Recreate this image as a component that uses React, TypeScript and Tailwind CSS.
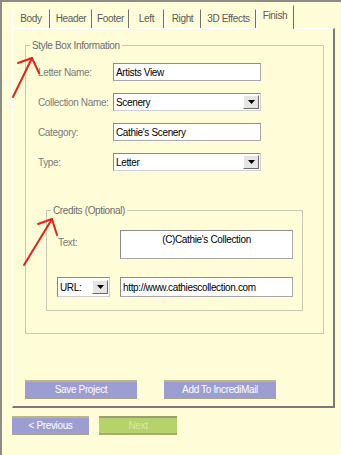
import React from "react";

const tabs = [
  { label: "Body", w: "w-[38px]" },
  { label: "Header", w: "w-[42px]" },
  { label: "Footer", w: "w-[37px]" },
  { label: "Left", w: "w-[35px]" },
  { label: "Right", w: "w-[37px]" },
  { label: "3D Effects", w: "w-[55px]" },
];

function Tab({ label, w }: { label: string; w: string }) {
  return (
    <div
      className={`${w} h-[19px] flex justify-center pt-[3px] border-t border-l border-white border-r border-r-[#6f6f6f] text-[#5a5a5a]`}
    >
      {label}
    </div>
  );
}

function TextBox({ value, className = "" }: { value: string; className?: string }) {
  return (
    <div
      className={`bg-white border border-[#a8a8a8] border-t-[#8c8c8c] border-l-[#8c8c8c] flex items-center pl-[2px] text-black ${className}`}
    >
      {value}
    </div>
  );
}

function Select({ value, className = "" }: { value: string; className?: string }) {
  return (
    <div
      className={`bg-white border border-[#8a8a8a] border-b-[#cfcfcf] border-r-[#cfcfcf] flex items-center pl-[2px] pr-[1px] text-black ${className}`}
    >
      <span className="flex-1">{value}</span>
      <div className="w-[16px] h-[14px] bg-[#e6e5e2] border border-white border-r-[#6a6a6a] border-b-[#6a6a6a] flex items-center justify-center">
        <svg width="7" height="4" viewBox="0 0 7 4">
          <path d="M0 0h7L3.5 4z" fill="#000" />
        </svg>
      </div>
    </div>
  );
}

function Btn({ label, className, green }: { label: string; className: string; green?: boolean }) {
  return (
    <div
      className={`${className} flex items-center justify-center border-t-2 border-b-2 ${
        green
          ? "bg-[#b6d36b] border-t-[#9c9c6c] border-b-[#a8a878] text-[#d7e8a2]"
          : "bg-[#9c9ed2] border-t-[#b9b38e] border-b-[#aaa684] text-white"
      }`}
    >
      {label}
    </div>
  );
}

export default function App() {
  return (
    <div className="relative w-[341px] h-[455px] overflow-hidden bg-[#fffcd8] border-t-2 border-l-2 border-[#8d8c84] font-['Liberation_Sans',Arial,sans-serif] text-[10px] leading-[11px] tracking-[-0.35px]">
      {/* Tab strip */}
      <div className="flex items-end h-[26px] pl-[10px]">
        {tabs.map((t) => (
          <Tab key={t.label} label={t.label} w={t.w} />
        ))}
        <div className="relative z-10 w-[38px] h-[24px] -mb-px bg-[#fffcd8] flex justify-center pt-[4px] border-t border-l border-white border-r border-r-[#6f6f6f] text-[#5a5a5a]">
          Finish
        </div>
      </div>

      {/* Tab panel */}
      <div className="ml-[10px] w-[323px] h-[380px] border-t border-l border-white border-r-2 border-b-2 border-r-[#7a7a7a] border-b-[#7a7a7a] pl-[12px] flex flex-col">
        <fieldset className="mt-[11px] w-[299px] border border-[#cac8b2] pb-[22px]">
          <legend className="ml-[4px] px-[2px] text-[#6c6c6c]">Style Box Information</legend>
          <div className="mt-[12px] pl-[12px] flex flex-col gap-[12px] text-[#7b7b7b]">
            <div className="flex items-center h-[18px]">
              <span className="w-[75px]">Letter Name:</span>
              <TextBox value="Artists View" className="w-[148px] h-[18px]" />
            </div>
            <div className="flex items-center h-[18px]">
              <span className="w-[75px]">Collection Name:</span>
              <Select value="Scenery" className="w-[148px] h-[18px]" />
            </div>
            <div className="flex items-center h-[18px]">
              <span className="w-[75px]">Category:</span>
              <TextBox value="Cathie's Scenery" className="w-[148px] h-[18px]" />
            </div>
            <div className="flex items-center h-[18px]">
              <span className="w-[75px]">Type:</span>
              <Select value="Letter" className="w-[148px] h-[18px]" />
            </div>
          </div>

          <fieldset className="mt-[34px] ml-[20px] w-[257px] border border-[#cac8b2] pb-[13px]">
            <legend className="ml-[4px] px-[2px] text-[#6c6c6c]">Credits (Optional)</legend>
            <div className="mt-[14px] pl-[10px] flex items-start">
              <span className="w-[63px] pl-[1px] pt-[7px] text-[#7b7b7b]">Text:</span>
              <div className="w-[173px] h-[29px] bg-white border border-[#a8a8a8] border-t-[#8c8c8c] border-l-[#8c8c8c] text-center pt-[3px] text-black">
                (C)Cathie's Collection
              </div>
            </div>
            <div className="mt-[18px] pl-[10px] flex items-center gap-[10px]">
              <Select value="URL:" className="w-[53px] h-[20px]" />
              <TextBox value="http://www.cathiescollection.com" className="w-[173px] h-[20px]" />
            </div>
          </fieldset>
        </fieldset>

        <div className="mt-[46px] flex gap-[27px]">
          <Btn label="Save Project" className="w-[112px] h-[19px]" />
          <Btn label="Add To IncrediMail" className="w-[112px] h-[19px]" />
        </div>
      </div>

      {/* Wizard navigation */}
      <div className="mt-[8px] pl-[10px] flex gap-[10px]">
        <Btn label="< Previous" className="w-[77px] h-[19px]" />
        <Btn label="Next" className="w-[78px] h-[19px]" green />
      </div>

      {/* Red annotation arrows */}
      <svg className="absolute left-[-2px] top-[-2px] pointer-events-none" width="341" height="455">
        <g stroke="#e2231a" strokeWidth="2" fill="none" strokeLinecap="round" strokeLinejoin="round">
          <path d="M13 97L32 58" />
          <path d="M18 63L32 58L39 73" />
          <path d="M24 265L52 219" />
          <path d="M38 224L52 219L57 235" />
        </g>
      </svg>
    </div>
  );
}
